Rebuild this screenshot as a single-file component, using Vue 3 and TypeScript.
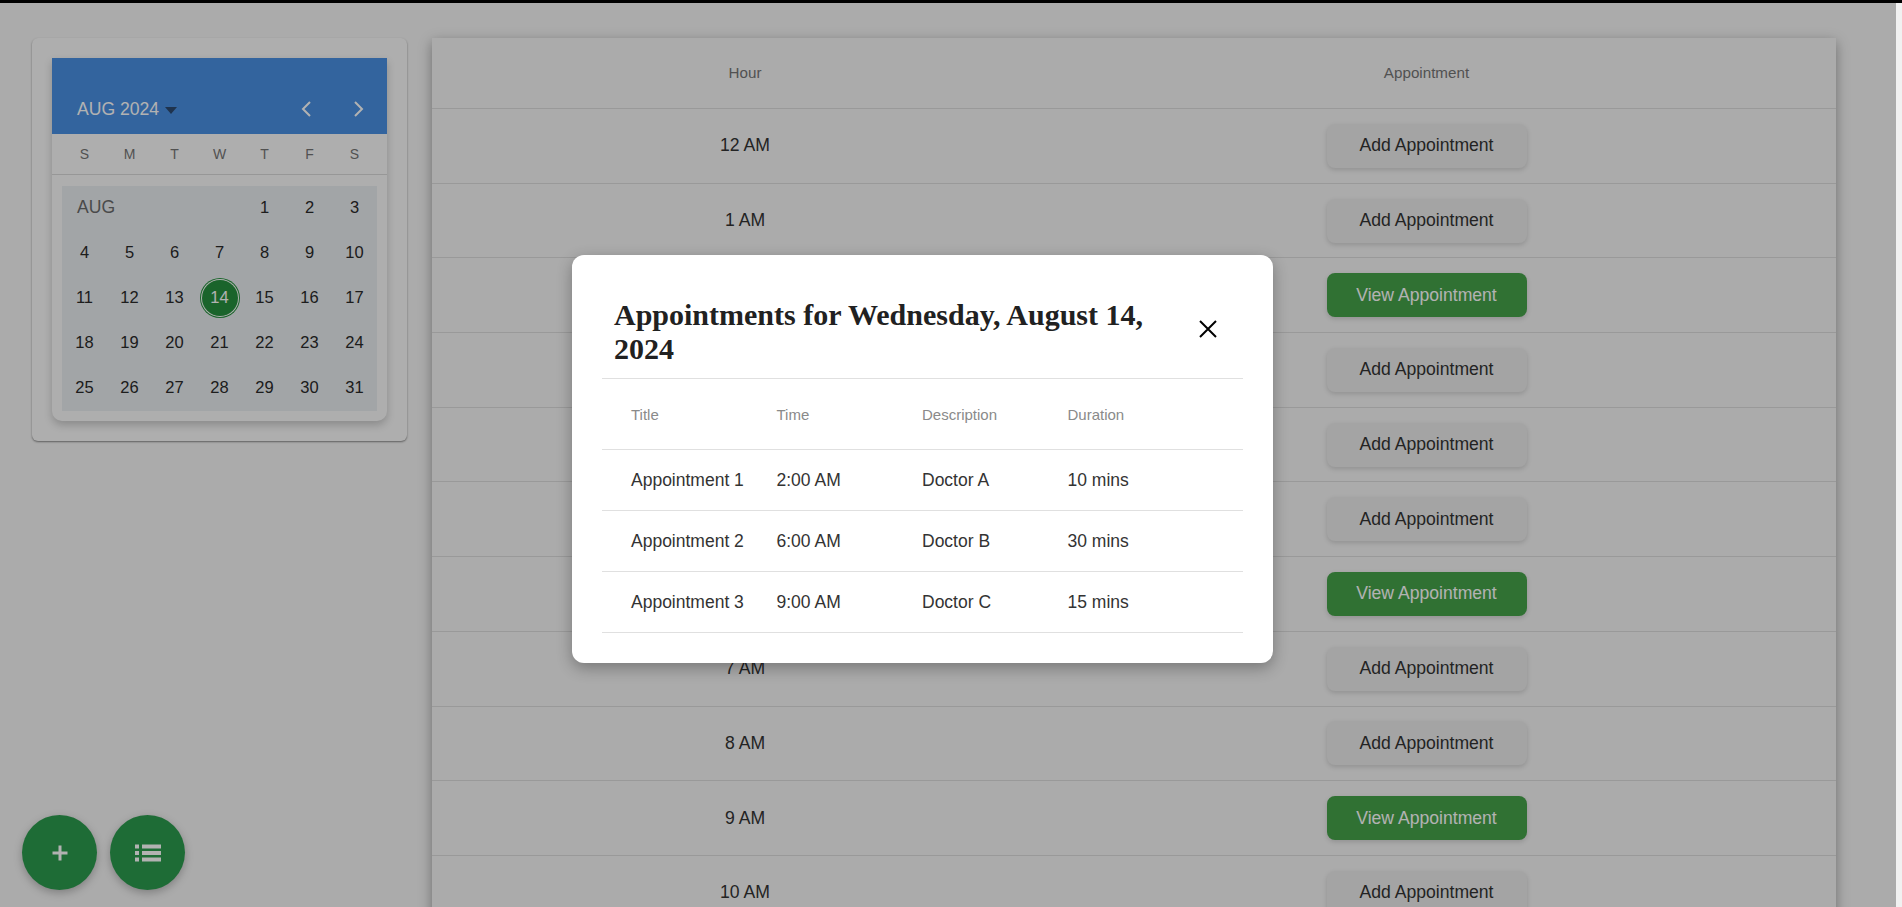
<script setup lang="ts">
import { ref } from 'vue'

type Appt = { title: string; time: string; doctor: string; duration: string }

const weekdays = ['S', 'M', 'T', 'W', 'T', 'F', 'S']
const days = Array.from({ length: 31 }, (_, i) => i + 1)
const selectedDay = ref(14)

const booked = [2, 6, 9]
const hours = Array.from({ length: 11 }, (_, i) => {
  const h = i === 0 ? 12 : i
  return { id: i, label: `${h} AM`, hasAppt: booked.includes(i) }
})

const appointments: Appt[] = [
  { title: 'Appointment 1', time: '2:00 AM', doctor: 'Doctor A', duration: '10 mins' },
  { title: 'Appointment 2', time: '6:00 AM', doctor: 'Doctor B', duration: '30 mins' },
  { title: 'Appointment 3', time: '9:00 AM', doctor: 'Doctor C', duration: '15 mins' },
]
</script>

<template>
  <div class="page">
    <aside class="side">
      <div class="cal-card">
        <div class="calendar">
          <div class="cal-head">
            <span class="cal-title">AUG 2024 <i class="caret"></i></span>
            <div class="cal-nav">
              <svg viewBox="0 0 24 24" class="chev"><path d="M15 5l-7 7 7 7" /></svg>
              <svg viewBox="0 0 24 24" class="chev"><path d="M9 5l7 7-7 7" /></svg>
            </div>
          </div>
          <div class="weekdays">
            <span v-for="(d, i) in weekdays" :key="i">{{ d }}</span>
          </div>
          <div class="month-wrap">
            <div class="month">
              <span class="month-name">AUG</span>
              <span
                v-for="d in days"
                :key="d"
                class="day"
              ><b v-if="d === selectedDay" class="selected">{{ d }}</b><template v-else>{{ d }}</template></span>
            </div>
          </div>
        </div>
      </div>
    </aside>

    <main class="schedule">
      <div class="row head">
        <div>Hour</div>
        <div>Appointment</div>
      </div>
      <div v-for="h in hours" :key="h.id" class="row">
        <div>{{ h.label }}</div>
        <div>
          <button class="btn" :class="{ view: h.hasAppt }">
            {{ h.hasAppt ? 'View Appointment' : 'Add Appointment' }}
          </button>
        </div>
      </div>
    </main>

    <div class="fabs">
      <button class="fab">
        <svg viewBox="0 0 16 16" width="16" height="16"><path d="M6.5 0.5h3v6h6v3h-6v6h-3v-6h-6v-3h6z" /></svg>
      </button>
      <button class="fab">
        <svg viewBox="0 0 26 18" width="26" height="18">
          <rect x="0" y="0.5" width="4" height="4" />
          <rect x="0" y="7" width="4" height="4" />
          <rect x="0" y="13.5" width="4" height="4" />
          <rect x="7" y="0.5" width="19" height="4" />
          <rect x="7" y="7" width="19" height="4" />
          <rect x="7" y="13.5" width="19" height="4" />
        </svg>
      </button>
    </div>

    <div class="overlay">
      <div class="modal">
        <div class="modal-head">
          <h2>Appointments for Wednesday, August 14, 2024</h2>
          <svg class="close" viewBox="0 0 18 18" width="18" height="18"><path d="M1 1l16 16M17 1L1 17" /></svg>
        </div>
        <div class="appts">
          <div class="appt-row appt-head">
            <span>Title</span>
            <span>Time</span>
            <span>Description</span>
            <span>Duration</span>
          </div>
          <div v-for="a in appointments" :key="a.title" class="appt-row">
            <span>{{ a.title }}</span>
            <span>{{ a.time }}</span>
            <span>{{ a.doctor }}</span>
            <span>{{ a.duration }}</span>
          </div>
        </div>
      </div>
    </div>

    <div class="scrollbar"></div>
  </div>
</template>

<style scoped>
.page {
  position: relative;
  box-sizing: border-box;
  height: 907px;
  overflow: hidden;
  display: flex;
  align-items: flex-start;
  gap: 25px;
  padding: 38px 66px 0 32px;
  background: #f5f5f5;
  font-family: "Liberation Sans", Arial, sans-serif;
  color: #333;
}

.side {
  flex: 0 0 375px;
}

.cal-card {
  background: #f9f9f9;
  padding: 20px;
  border-radius: 6px;
  box-shadow: 0 1px 2px rgba(0, 0, 0, 0.45);
}

.calendar {
  border-radius: 0 0 10px 10px;
  background: #fafafa;
  box-shadow: 0 4px 8px rgba(0, 0, 0, 0.2);
}

.cal-head {
  height: 76px;
  background: #4a90e2;
  display: flex;
  align-items: flex-end;
  justify-content: space-between;
  padding: 0 17px 12px 25px;
  box-sizing: border-box;
  color: #fff;
}

.cal-title {
  font-size: 17.6px;
  line-height: 26px;
}

.caret {
  display: inline-block;
  vertical-align: middle;
  margin-left: 1px;
  border-left: 6px solid transparent;
  border-right: 6px solid transparent;
  border-top: 7px solid #2d4a70;
}

.cal-nav {
  display: flex;
  gap: 27px;
  height: 26px;
}

.chev {
  width: 24px;
  height: 26px;
  fill: none;
  stroke: #fff;
  stroke-width: 2;
}

.weekdays {
  display: grid;
  grid-template-columns: repeat(7, 45px);
  padding: 0 10px;
  height: 41px;
  align-items: center;
  border-bottom: 1px solid #d8d8d8;
  font-size: 14px;
  text-align: center;
  color: #757575;
  box-sizing: border-box;
}

.month-wrap {
  padding: 11px 10px 10px;
}

.month {
  display: grid;
  grid-template-columns: repeat(7, 45px);
  grid-auto-rows: 45px;
  align-items: center;
  justify-items: center;
  background: #e9edf0;
  font-size: 16.5px;
  color: #2a2a2a;
}

.day {
  margin-bottom: 2px;
}

.month-name {
  grid-column: 1 / span 4;
  justify-self: start;
  padding: 0 0 2px 15px;
  font-size: 17.6px;
  color: #6b6b6b;
}

.selected {
  display: flex;
  align-items: center;
  justify-content: center;
  width: 36px;
  height: 36px;
  border-radius: 50%;
  background: #26903e;
  color: #fff;
  font-weight: 400;
  box-shadow: 0 0 0 1px #fff, 0 0 0 2px #26903e;
}

.schedule {
  flex: 1;
  background: #f5f5f5;
  box-shadow: 0 4px 12px rgba(0, 0, 0, 0.35);
}

.row {
  display: grid;
  grid-template-columns: 626px 737px 1fr;
  height: 74.7px;
  box-sizing: border-box;
  align-items: center;
  justify-items: center;
  border-bottom: 1px solid #dcdcdc;
  font-size: 17.6px;
}

.row.head {
  height: 71px;
  padding-bottom: 1px;
  font-size: 15.2px;
  color: #757575;
}

.btn {
  display: block;
  width: 200px;
  height: 44px;
  border: none;
  border-radius: 8px;
  background: #ebebeb;
  color: #333;
  font: inherit;
  box-shadow: 0 2px 5px rgba(0, 0, 0, 0.15);
}

.btn.view {
  background: #46a24a;
  color: #fff;
}

.fabs {
  position: absolute;
  left: 22px;
  bottom: 17px;
  display: flex;
  gap: 13px;
}

.fab {
  width: 75px;
  height: 75px;
  border: none;
  border-radius: 50%;
  background: #2c9b4e;
  display: flex;
  align-items: center;
  justify-content: center;
  box-shadow: 0 3px 8px rgba(0, 0, 0, 0.25);
}

.fab svg {
  fill: #fff;
}

.overlay {
  position: absolute;
  inset: 0;
  border-top: 3px solid #000;
  background: rgba(0, 0, 0, 0.3);
}

.scrollbar {
  position: absolute;
  top: 3px;
  right: 0;
  bottom: 0;
  width: 6px;
  background: #f1f1f1;
}

.modal {
  position: absolute;
  left: 572px;
  top: 252px;
  width: 701px;
  box-sizing: border-box;
  padding: 30px;
  background: #fff;
  border-radius: 12px;
  box-shadow: 0 5px 15px rgba(0, 0, 0, 0.3);
  color: #333;
}

.modal-head {
  display: flex;
  align-items: center;
  justify-content: space-between;
  padding: 0 26px 0 12px;
  height: 94px;
  box-sizing: border-box;
  border-bottom: 1px solid #e0e0e0;
}

.modal-head h2 {
  margin: 0;
  width: 560px;
  font-family: "Liberation Serif", "Times New Roman", serif;
  font-size: 30px;
  line-height: 34px;
  font-weight: 700;
  color: #212121;
}

.close {
  margin-bottom: 6px;
  fill: none;
  stroke: #000;
  stroke-width: 2;
}

.appt-row {
  display: grid;
  grid-template-columns: repeat(4, 145.5px);
  align-items: center;
  height: 61px;
  box-sizing: border-box;
  padding-left: 29px;
  border-bottom: 1px solid #e0e0e0;
  font-size: 17.5px;
}

.appt-head {
  height: 71px;
  font-size: 15px;
  color: #8a8a8a;
}
</style>

<style>
html, body {
  margin: 0;
  overflow: hidden;
}
</style>
